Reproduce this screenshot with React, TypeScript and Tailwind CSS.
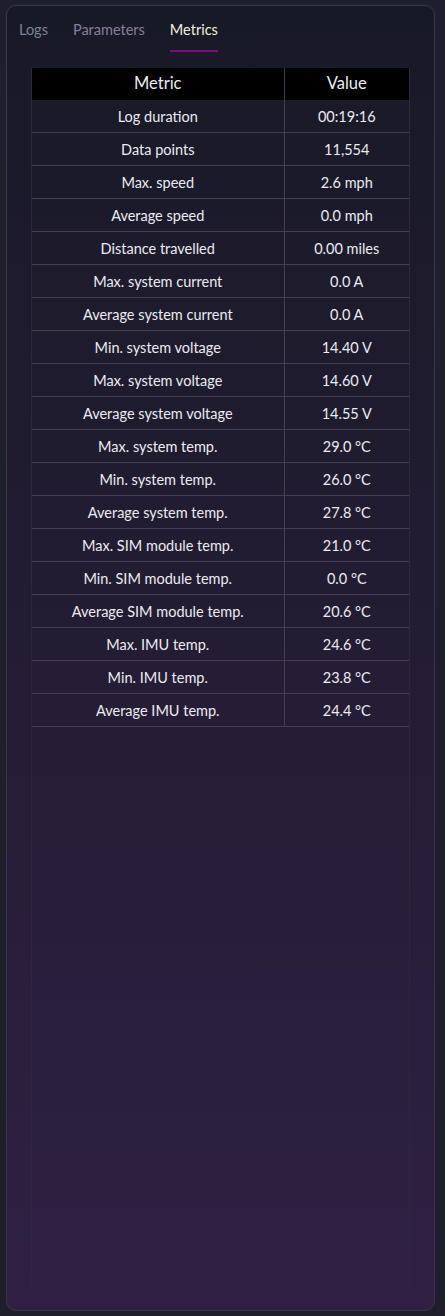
import React from "react";

const metrics: [string, string][] = [
  ["Log duration", "00:19:16"],
  ["Data points", "11,554"],
  ["Max. speed", "2.6 mph"],
  ["Average speed", "0.0 mph"],
  ["Distance travelled", "0.00 miles"],
  ["Max. system current", "0.0 A"],
  ["Average system current", "0.0 A"],
  ["Min. system voltage", "14.40 V"],
  ["Max. system voltage", "14.60 V"],
  ["Average system voltage", "14.55 V"],
  ["Max. system temp.", "29.0 °C"],
  ["Min. system temp.", "26.0 °C"],
  ["Average system temp.", "27.8 °C"],
  ["Max. SIM module temp.", "21.0 °C"],
  ["Min. SIM module temp.", "0.0 °C"],
  ["Average SIM module temp.", "20.6 °C"],
  ["Max. IMU temp.", "24.6 °C"],
  ["Min. IMU temp.", "23.8 °C"],
  ["Average IMU temp.", "24.4 °C"],
];

export default function App() {
  return (
    <div className="w-[445px] h-[1316px] bg-[#1f1e2b] p-[5px] pl-[6px] pr-[10px] font-['Lato',sans-serif]">
      <div className="h-full rounded-[10px] border border-[#3a3649] bg-gradient-to-b from-[#181926] to-[#2f2043] flex flex-col pb-[22px]">
        {/* tabs */}
        <div className="flex items-start gap-[25px] px-[12px] pt-[13px] text-[14.5px]">
          <span className="text-[#7d8298] pb-[10px]">Logs</span>
          <span className="text-[#8a7f98] pb-[10px]">Parameters</span>
          <span className="text-[#f2f0dc] pb-[9px] border-b-2 border-[#7e0a7e]">Metrics</span>
        </div>

        <div className="flex-1 mx-[24px] mt-[16px] border-x border-[#2c2739]">
          <table className="w-full border-collapse text-center text-[#ecebf2]">
            <thead>
              <tr className="bg-black h-[32px] text-[16.5px]">
                <th className="font-normal w-[252px] border-r border-[#3f3a4c]">Metric</th>
                <th className="font-normal">Value</th>
              </tr>
            </thead>
            <tbody className="text-[14.5px]">
              {metrics.map(([name, value]) => (
                <tr key={name} className="h-[33px] border-b border-[#45404f]">
                  <td className="border-r border-[#45404f] pt-px">{name}</td>
                  <td className="pt-px">{value}</td>
                </tr>
              ))}
            </tbody>
          </table>
        </div>
      </div>
    </div>
  );
}
